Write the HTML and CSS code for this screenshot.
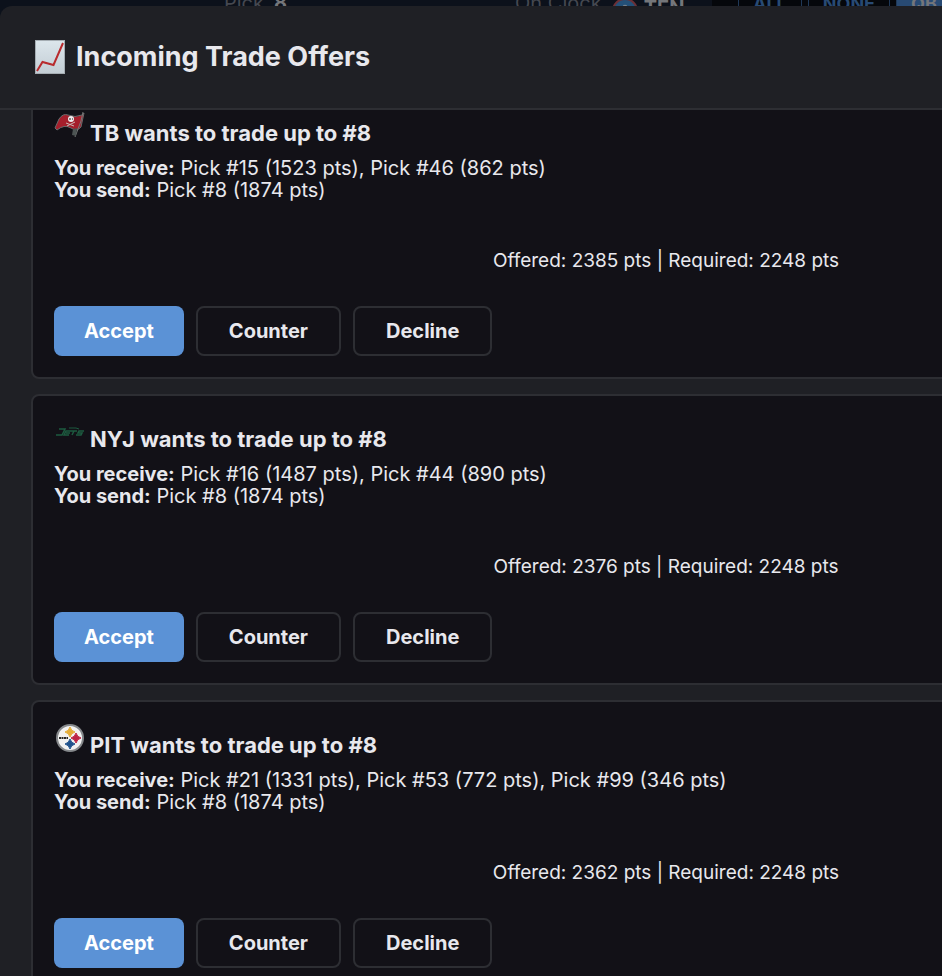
FILE: index.html
```html
<!DOCTYPE html>
<html lang="en">
<head>
	<meta charset="UTF-8">
	<meta name="viewport" content="width=device-width, initial-scale=1">
	<title>Mock Draft</title>
	<link rel="stylesheet" href="styles.css">
</head>
<body>
<!-- draft board behind the modal -->
<div class="board" aria-hidden="true">
	<div class="status">
		<span class="label pick">Pick</span>
		<span class="value">8</span>
		<span class="label clock">On Clock</span>
		<svg class="team-logo" viewBox="0 0 26 26">
			<circle cx="13" cy="13" r="12" fill="#245078" stroke="#6b3036" stroke-width="2"/>
			<path d="M7 9L9 14M12 7L13 13L14 7M19 9L17 14" fill="none" stroke="#75808c" stroke-width="2"/>
		</svg>
		<span class="value team">TEN</span>
	</div>
	<div class="filters">
		<button class="filter" tabindex="-1">ALL</button>
		<button class="filter" tabindex="-1">NONE</button>
		<button class="filter current" tabindex="-1">QB</button>
	</div>
</div>

<div class="modal" role="dialog" aria-labelledby="modal-title">
	<div class="modal-header">
		<svg class="chart-icon" viewBox="0 0 30 34" aria-hidden="true">
			<defs>
				<linearGradient id="paper" x1="0" y1="0" x2="0" y2="1">
					<stop offset="0" stop-color="#dce6ec"/>
					<stop offset="1" stop-color="#c3cdd4"/>
				</linearGradient>
			</defs>
			<rect x="0.5" y="0.5" width="29" height="33" fill="url(#paper)" stroke="#a5adb3"/>
			<path d="M2 31L7.500 22L18.500 25L28 3" fill="none" stroke="#b82b2e" stroke-width="2"/>
		</svg>
		<h1 id="modal-title">Incoming Trade Offers</h1>
	</div>

	<div class="modal-body">
		<div class="offers">
			<div class="offer">
				<h2>
					<svg class="offer-logo" viewBox="0 0 32 32" aria-hidden="true">
						<path d="M5 9Q9 3 14 5Q21 8 28 5L30 3L27 17Q23 22 17 18Q10 14 3 20L1 18Z" fill="#a51f2c" stroke="#686b6c" stroke-width="1"/>
						<path d="M29 2L27 11L21 27" fill="none" stroke="#777978" stroke-width="1"/>
						<circle cx="17" cy="9" r="3" fill="#eee"/>
						<path d="M15 9h2M18 9h1" stroke="#28191b" stroke-width="1"/>
						<path d="M12 13L20 16M13 16L21 12" stroke="#c9b9b6" stroke-width="1"/>
						<path d="M19 19L23 18L22 26L18 25Z" fill="#4d5453"/>
					</svg>
					<span>TB wants to trade up to #8</span>
				</h2>
				<div class="terms">
					<div><strong>You receive:</strong> Pick #15 (1523 pts), Pick #46 (862 pts)</div>
					<div><strong>You send:</strong> Pick #8 (1874 pts)</div>
				</div>
				<div class="points">Offered: 2385 pts | Required: 2248 pts</div>
				<div class="actions">
					<button class="btn accept">Accept</button>
					<button class="btn">Counter</button>
					<button class="btn">Decline</button>
				</div>
			</div>

			<div class="offer">
				<h2>
					<svg class="offer-logo" viewBox="0 0 32 32" aria-hidden="true">
						<g fill="none" stroke="#1d5b40" stroke-width="1.500">
							<path d="M5 13H11L8 19H2M17 15H12L10 19H15M12 17H16M17 15H23M20 15L18 19M30 15H25L24 17H28L27 19H22"/>
							<path d="M15 12H22L25 13" stroke-width="1"/>
						</g>
					</svg>
					<span>NYJ wants to trade up to #8</span>
				</h2>
				<div class="terms">
					<div><strong>You receive:</strong> Pick #16 (1487 pts), Pick #44 (890 pts)</div>
					<div><strong>You send:</strong> Pick #8 (1874 pts)</div>
				</div>
				<div class="points">Offered: 2376 pts | Required: 2248 pts</div>
				<div class="actions">
					<button class="btn accept">Accept</button>
					<button class="btn">Counter</button>
					<button class="btn">Decline</button>
				</div>
			</div>

			<div class="offer">
				<h2>
					<svg class="offer-logo" viewBox="0 0 32 32" aria-hidden="true">
						<circle cx="16" cy="16" r="13" fill="#f2f2f2" stroke="#85888b" stroke-width="2"/>
						<path d="M16 5Q17 9 21 10Q17 11 16 15Q15 11 11 10Q15 9 16 5Z" fill="#e4ad38" stroke="#e4ad38"/>
						<path d="M22 11Q23 15 27 16Q23 17 22 21Q21 17 17 16Q21 15 22 11Z" fill="#bd2444" stroke="#bd2444"/>
						<path d="M16 17Q17 21 21 22Q17 23 16 27Q15 23 11 22Q15 21 16 17Z" fill="#20528d" stroke="#20528d"/>
						<path d="M5 16H14" stroke="#292929" stroke-width="2" stroke-dasharray="2 0.500"/>
					</svg>
					<span>PIT wants to trade up to #8</span>
				</h2>
				<div class="terms">
					<div><strong>You receive:</strong> Pick #21 (1331 pts), Pick #53 (772 pts), Pick #99 (346 pts)</div>
					<div><strong>You send:</strong> Pick #8 (1874 pts)</div>
				</div>
				<div class="points">Offered: 2362 pts | Required: 2248 pts</div>
				<div class="actions">
					<button class="btn accept">Accept</button>
					<button class="btn">Counter</button>
					<button class="btn">Decline</button>
				</div>
			</div>
		</div>
	</div>
</div>
</body>
</html>
```
FILE: styles.css
```css
*{box-sizing: border-box;}
html,body{height: 100%;}
body{
margin: 0;
overflow: hidden;
background: #0c111b;
color: #e8e8ed;
font-family: Inter, "Liberation Sans", sans-serif;
display: flex;
flex-direction: column;
}
/* board */
.board{
flex: none;
height: 6px;
display: flex;
justify-content: space-between;
overflow: hidden;
white-space: nowrap;
}
.status{display: flex;align-items: center;height: 6px;padding-left: 224px;}
.label{font-size: 20px;color: #454850;}
.value{font-size: 20px;font-weight: 700;color: #74767a;}
.pick{margin-right: 10px;}
.clock{margin-left: 228px;margin-right: 10px;}
.team-logo{width: 26px;height: 26px;flex: none;margin-right: 6px;margin-top: 16px;}
.team{padding-top: 10px;}
.filters{
display: flex;align-items: center;gap: 6px;
width: 230px;padding-left: 26px;
background: #05070b;
}
.filter{
flex: none;height: 36px;padding: 0 14px;
border: 1px solid #1f3857;background: none;
font: 700 18px Inter, "Liberation Sans", sans-serif;
color: #284a73;
}
.filters>.current{background: #284a73;color: #74767a;}
/* modal, wider than the window */
.modal{
flex: 1;min-height: 0;
width: calc(100% + 390px);
display: flex;flex-direction: column;
background: #1f2025;
border-radius: 12px 12px 0 0;
overflow: hidden;
}
.modal-header{
flex: none;
display: flex;align-items: center;gap: 11px;
height: 104px;padding: 0 35px;
border-bottom: 2px solid #2d2e33;
}
.modal-header h1{margin: 0;font-size: 27px;line-height: 32px;font-weight: 700;}
.chart-icon{width: 30px;height: 34px;}
.modal-body{flex: 1;min-height: 0;overflow: hidden;padding: 0 31px;}
/* list is scrolled down a little */
.offers{margin-top: -22px;display: flex;flex-direction: column;gap: 15px;}
.offer{
padding: 20px 21px 21px;
border: 2px solid #2d2e33;border-radius: 8px;
background: #121117;
}
.offer h2{
display: flex;align-items: flex-start;gap: 4px;
margin: 0 0 11px;
height: 36px;
font-size: 22px;line-height: 26px;font-weight: 700;
}
.offer h2 span{padding-top: 10px;}
.offer-logo{width: 32px;height: 32px;}
.terms{font-size: 20px;line-height: 22px;}
.points{
margin: 48px 0 34px;
font-size: 19px;line-height: 23px;text-align: center;
}
.actions{display: flex;gap: 12px;}
.btn{
height: 50px;padding: 0 31px;
border: 2px solid #2d2e33;border-radius: 8px;
background: none;color: #e8e8ed;
font: 700 20px Inter, "Liberation Sans", sans-serif;
}
.accept{padding: 0 30px;border: none;background: #5b92d6;color: #fff;}
```
